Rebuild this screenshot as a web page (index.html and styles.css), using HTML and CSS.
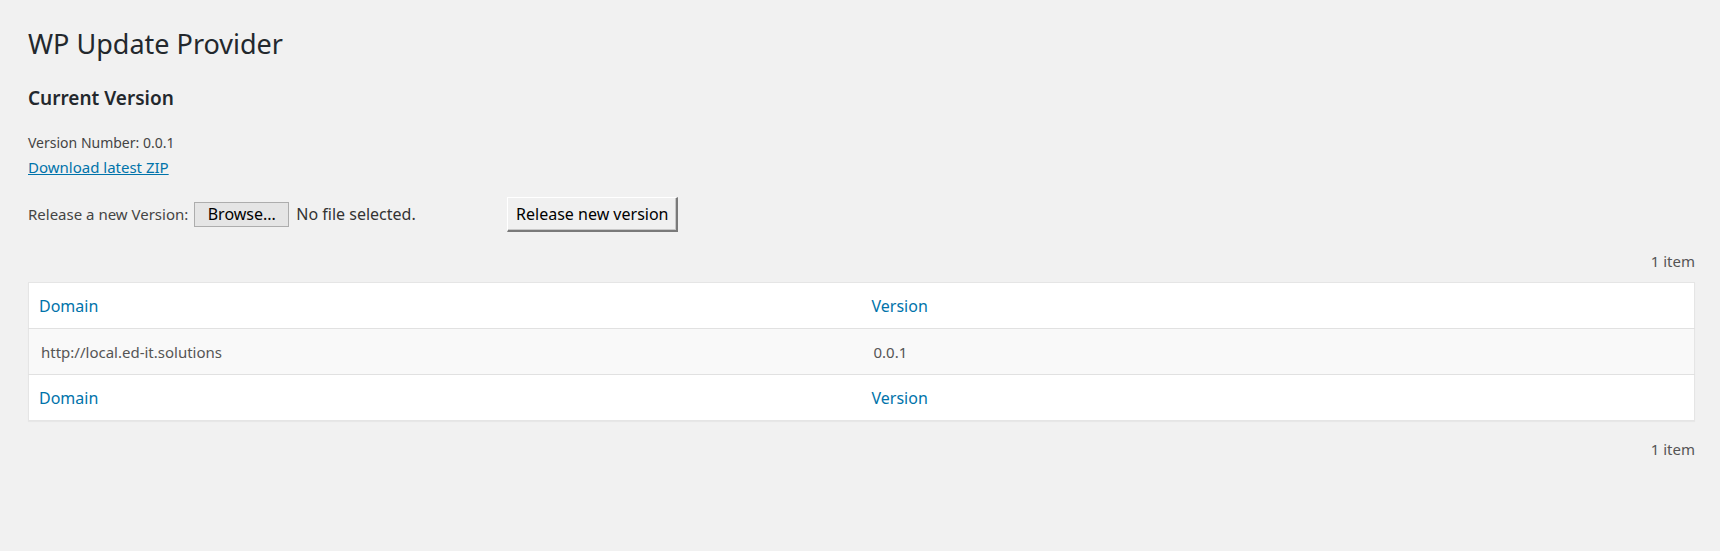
FILE: index.html
```html
<!DOCTYPE html>
<html>
<head>
<meta charset="utf-8">
<title>WP Update Provider</title>
<link rel="stylesheet" href="styles.css">
</head>
<body>
<div class="wrap">
  <h1 class="title">WP Update Provider</h1>
  <h2 class="subtitle">Current Version</h2>
  <p class="info">Version Number: 0.0.1<br><a class="link" href="#">Download latest ZIP</a></p>
  <form class="release">
    <span class="label">Release a new Version:</span>
    <span class="browse">Browse...</span>
    <span class="nofile">No file selected.</span>
    <span class="submit">Release new version</span>
  </form>
  <div class="count">1 item</div>
  <table class="list">
    <thead>
      <tr><th><a href="#">Domain</a></th><th><a href="#">Version</a></th></tr>
    </thead>
    <tbody>
      <tr class="alt"><td>http://local.ed-it.solutions</td><td>0.0.1</td></tr>
    </tbody>
    <tfoot>
      <tr><th><a href="#">Domain</a></th><th><a href="#">Version</a></th></tr>
    </tfoot>
  </table>
  <div class="count">1 item</div>
</div>
</body>
</html>
```
FILE: styles.css
```css
html, body { margin: 0; padding: 0; }
body {
  background: #f1f1f1;
  color: #23282d;
  font-family: "Noto Sans", "Open Sans", sans-serif;
  font-size: 14px;
}
.wrap { padding: 24px 25px 0 28px; }
.title {
  margin: 0;
  font-size: 27px;
  font-weight: 400;
  line-height: 40px;
}
.subtitle {
  margin: 20px 0 0;
  font-size: 19px;
  font-weight: 600;
  line-height: 28px;
}
.info {
  margin: 18px 0 0;
  font-size: 14px;
  line-height: 25px;
  color: #444;
}
.link { color: #0073aa; font-size: 15px; }
.release {
  display: flex;
  align-items: center;
  margin-top: 16px;
  height: 36px;
  font-size: 15px;
  color: #444;
}
.browse {
  margin-left: 6px;
  box-sizing: border-box;
  width: 95px;
  height: 25px;
  background: #e5e5e5;
  border: 1px solid #adadad;
  color: #000;
  font-size: 16px;
  display: flex;
  align-items: center;
  justify-content: center;
}
.nofile {
  margin-left: 7px;
  font-size: 16px;
  color: #333;
  width: 211px;
}
.submit {
  box-sizing: border-box;
  width: 171px;
  height: 35px;
  background: #f0f0f0;
  border-top: 1px solid #fff;
  border-left: 1px solid #fff;
  border-right: 2px solid #7a7a7a;
  border-bottom: 2px solid #7a7a7a;
  box-shadow: inset -1px -1px 0 #c8c8c8;
  color: #000;
  font-size: 16px;
  display: flex;
  align-items: center;
  justify-content: center;
}
.count {
  text-align: right;
  font-size: 15px;
  color: #555;
  line-height: 20px;
  margin-top: 19px;
  margin-bottom: 11px;
}
.list {
  width: 100%;
  border-collapse: collapse;
  background: #fff;
  border: 1px solid #e5e5e5;
  box-shadow: 0 1px 1px rgba(0,0,0,.04);
  table-layout: fixed;
}
.list th, .list td {
  text-align: left;
  padding: 0 10px;
  height: 45px;
  font-weight: 400;
}
.list th { font-size: 16px; }
.list th a { color: #0073aa; text-decoration: none; }
.list thead tr { border-bottom: 1px solid #e1e1e1; }
.list tfoot tr { border-top: 1px solid #e1e1e1; }
.list td { font-size: 15px; color: #555; padding-left: 12px; }
.list tr.alt { background: #f9f9f9; }
.list + .count { margin-top: 18px; }
```
